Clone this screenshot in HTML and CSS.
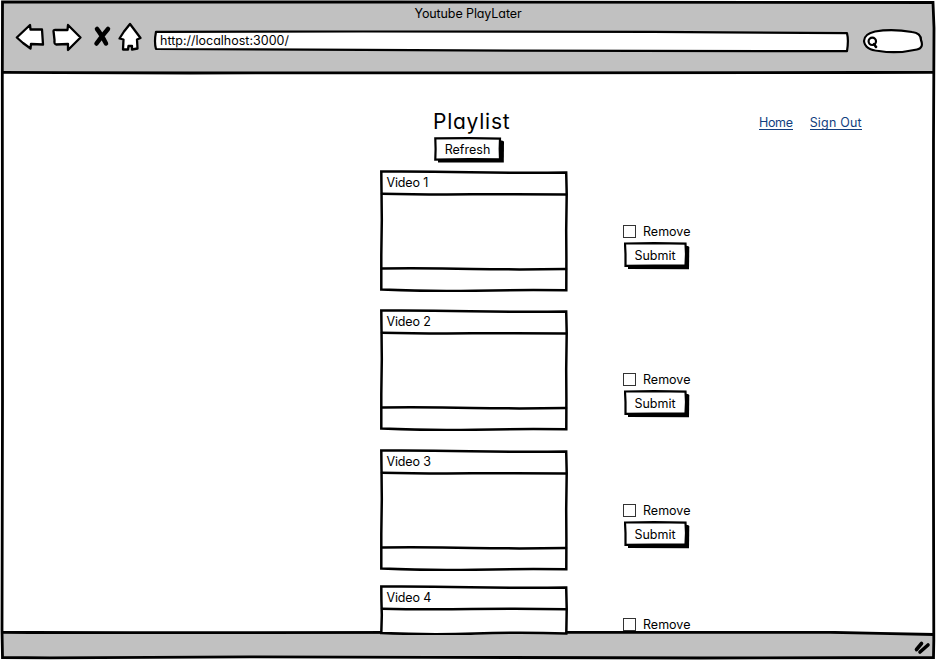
FILE: index.html
```html
<!DOCTYPE html>
<html lang="en">
<head>
<meta charset="utf-8">
<title>Youtube PlayLater</title>
<link rel="stylesheet" href="styles.css">
</head>
<body>
<svg class="defs" width="0" height="0" aria-hidden="true">
  <symbol id="card" viewBox="0 0 188 122">
    <path class="ink square" d="M1.300 1.600 Q40 1.300 90 2.200 T186.200 2.500 L186.700 24 L186.200 60 L186.400 90 L186.300 120.300 Q140 119.800 95 120.700 T1.300 119.600 L1.300 85 L1.800 50 L1.500 20 Z"/>
    <path class="ink" d="M2 23.700 Q40 24.600 92 24.300 T186 24.400 M2 98.400 Q50 98 92 98.900 T186 99"/>
  </symbol>
  <symbol id="card-short" viewBox="0 0 188 50">
    <path class="ink square" d="M1.300 1.600 Q40 1.300 90 2.200 T186.200 2.500 L186.700 24 L186.300 48.500 Q140 47 95 48.500 T1.300 48 L1.800 30 L1.400 15 Z"/>
    <path class="ink" d="M2 23.700 Q40 24.600 92 24 T186 24.200"/>
  </symbol>
  <symbol id="button" viewBox="0 0 66 28">
    <path d="M4 5 L64 4 L65.300 5 L65 27.300 L4 27 Z"/>
    <path class="ink thin square" d="M1 1.500 L30 1.200 L61.500 1.700 L62 12 L61.500 23.500 L30 23.700 L1.500 23.900 L1.500 12 Z"/>
  </symbol>
</svg>
<div class="browser">
  <header class="chrome">
    <div class="title">Youtube PlayLater</div>
    <div class="toolbar">
      <svg class="tools" width="128" height="32" viewBox="0 0 128 32">
        <path class="ink icon" d="M1.800 15.500 L15 3 L15.500 7.500 L27 7.500 L28 22.500 L16 22 L15.500 26.500 L8 21 Z"/>
        <path class="ink icon" d="M38.500 9 Q38.500 7.500 41.500 8 L52.500 8 L53 3 L65.500 15.500 L53 28 L53 22 L41 22.500 Q39 22 39.500 18 Z"/>
        <path class="cross" d="M82 7 Q86 12 91 21.500 M93 7 Q87 14 81.500 21.500"/>
        <path class="ink icon" d="M115 2 L125.500 16 L122 17.500 L122.500 26.500 L117 27.500 L117 24 L113.500 24 L113 27.500 L108 27.500 L108.500 17.500 L104.500 16.500 L109 9.500 Z"/>
      </svg>
      <div class="address">
        <svg class="outline" width="698" height="24" viewBox="0 0 698 24">
          <path class="ink thin" d="M3 1.800 L210 1.500 L500 1.800 L570 2.300 L694 3.200 Q695.800 10 694 21.200 L360 20.700 L210 19.800 L3 19 Q1 12 3 1.800 Z"/>
        </svg>
        <span class="url">http://localhost:3000/</span>
      </div>
      <svg class="search" width="62" height="28" viewBox="0 0 62 28">
        <path class="ink thin" d="M13 3.500 Q30 .5 50 4 Q59 5 59 12 Q62 20 55 21.500 Q35 26 17 23 Q3 22 2 13 Q2 6 13 3.500 Z"/>
        <circle class="ink thin" cx="10.300" cy="13.300" r="3.700"/>
        <path class="ink" d="M12 16 L14 19"/>
      </svg>
    </div>
  </header>
  <main class="page">
    <div class="heading">
      <div class="brand">
        <h1>Playlist</h1>
        <button class="button refresh"><svg class="outline" width="71" height="26" viewBox="0 0 71 26">
          <path d="M4 4 L68 3.500 L70 4.500 L69.800 25.600 L4 25.400 Z"/>
          <path class="ink thin square" d="M1.300 1.300 L35 1.200 L66 1.700 L65.700 12 L66 22.300 L35 22.200 L1.300 22.700 L1.600 12 Z"/>
        </svg><span>Refresh</span></button>
      </div>
      <nav><a href="#">Home</a><a href="#">Sign Out</a></nav>
    </div>
    <section class="row first">
      <article class="card"><svg class="outline" width="188" height="122"><use href="#card"/></svg><h2>Video 1</h2></article>
      <div class="form"><label><i class="box"></i>Remove</label><button class="button"><svg class="outline" width="66" height="28"><use href="#button"/></svg><span>Submit</span></button></div>
    </section>
    <section class="row second">
      <article class="card"><svg class="outline" width="188" height="122"><use href="#card"/></svg><h2>Video 2</h2></article>
      <div class="form"><label><i class="box"></i>Remove</label><button class="button"><svg class="outline" width="66" height="28"><use href="#button"/></svg><span>Submit</span></button></div>
    </section>
    <section class="row third">
      <article class="card"><svg class="outline" width="188" height="122"><use href="#card"/></svg><h2>Video 3</h2></article>
      <div class="form"><label><i class="box"></i>Remove</label><button class="button"><svg class="outline" width="66" height="28"><use href="#button"/></svg><span>Submit</span></button></div>
    </section>
    <section class="row fourth">
      <article class="card short"><svg class="outline" width="188" height="50"><use href="#card-short"/></svg><h2>Video 4</h2></article>
      <div class="form"><label><i class="box"></i>Remove</label></div>
    </section>
  </main>
  <footer class="status">
    <svg class="footer-shape" width="936" height="29" viewBox="0 0 936 29">
      <path fill="#c1c1c1" d="M2 1.500 L840 1.500 L934 3.500 L934 27 L2 27 Z"/>
      <path class="line" d="M2 1.300 L30 1.500 L130 1.700 L480 1.300 L830 1.300 L880 2.300 L934 3.500"/>
      <path class="grip" d="M916.500 18.500 L921.500 12.500 M920 21 L928 14"/>
    </svg>
  </footer>
  <svg class="frame" width="936" height="660" viewBox="0 0 936 660">
    <path class="line" d="M2.500 2 L400 2 L933 2.500 L934 28 L933.500 140 L933.300 400 L933.800 640 L933.500 657.500 L700 658 L430 657.300 L250 656.800 L50 657.900 L2.500 657.500 L2 630 L2.500 400 L2.300 80 Z"/>
    <path class="line" d="M2.500 72.300 L60 72.700 L190 73 L500 72.800 L860 72.500 L934 72.300"/>
  </svg>
</div>
</body>
</html>
```
FILE: styles.css
```css
* { box-sizing: border-box; }
body {
  margin: 0;
  background: #fff;
  color: #000;
  font: 12.5px/16px Inter, "Liberation Sans", sans-serif;
  font-feature-settings: "cv11";
}
.defs { position: absolute; }
.ink {
  fill: #fff;
  stroke: #000;
  stroke-width: 2.5;
  stroke-linejoin: round;
  stroke-linecap: round;
}
.ink.thin { stroke-width: 2.2; }
.ink.icon { stroke-width: 2.3; }
.ink.square { stroke-linejoin: miter; }
.line { fill: none; stroke: #000; stroke-width: 2.8; }
.cross, .grip { fill: none; stroke: #000; stroke-width: 4.5; stroke-linecap: round; }
.grip { stroke-width: 3.6; }

.browser {
  position: relative;
  display: flex;
  flex-direction: column;
  width: 936px;
  height: 660px;
  overflow: hidden;
}
.frame { position: absolute; inset: 0; pointer-events: none; }
.chrome {
  height: 72px;
  margin: 1px 2px 0;
  padding-top: 5px;
  background: #c1c1c1;
  flex: none;
}
.title { text-align: center; letter-spacing: -.1px; }
.toolbar { display: flex; align-items: flex-start; padding-left: 13px; }
.tools { flex: none; }
.address {
  position: relative;
  width: 698px;
  height: 24px;
  margin: 8px 0 0 10px;
  padding: 3px 0 0 7px;
  flex: none;
}
.outline { position: absolute; left: 0; top: 0; }
.url, .card h2, .button span { position: relative; }
.search { flex: none; margin: 6px 0 0 11px; }

.page { height: 558px; flex: none; padding: 36px 0 0 380px; }
.heading { display: flex; height: 61px; }
.brand { width: 188px; padding-left: 53px; }
h1 { margin: 0; font-size: 21px; line-height: 25px; font-weight: 400; letter-spacing: .75px; }
.button {
  position: relative;
  display: block;
  width: 66px;
  height: 28px;
  padding: 0 4px 1px 0;
  border: 0;
  background: none;
  color: inherit;
  font: inherit;
  font-feature-settings: inherit;
}
.refresh { width: 71px; height: 26px; margin: 3px 0 0 1px; }
nav { display: flex; gap: 17px; padding: 6px 0 0 191px; letter-spacing: -.35px; }
nav a + a { letter-spacing: .2px; }
nav a { height: 15px; line-height: 15px; color: #123f80; text-decoration: none; border-bottom: 1px solid #123f80; }

.row { display: flex; height: 139px; }
.row.second { height: 140px; }
.row.third { height: 136px; }
.row.fourth { height: 50px; }
.card { position: relative; width: 188px; height: 122px; padding: 5px 6.500px; flex: none; }
.card.short { height: 50px; z-index: 1; }
.card h2 { margin: 0; font-size: 12.5px; line-height: 16px; font-weight: 400; letter-spacing: -.15px; }
.form { padding: 54px 0 0 56px; }
.second .form { padding-top: 63px; }
.fourth .form { padding-top: 32px; }
label { display: flex; align-items: flex-start; height: 16px; margin-bottom: 2px; }
.box { width: 13px; height: 13px; margin: 1px 7px 0 -1px; border: 1px solid #333; }
.status { height: 29px; flex: none; }
.footer-shape { display: block; }
```
